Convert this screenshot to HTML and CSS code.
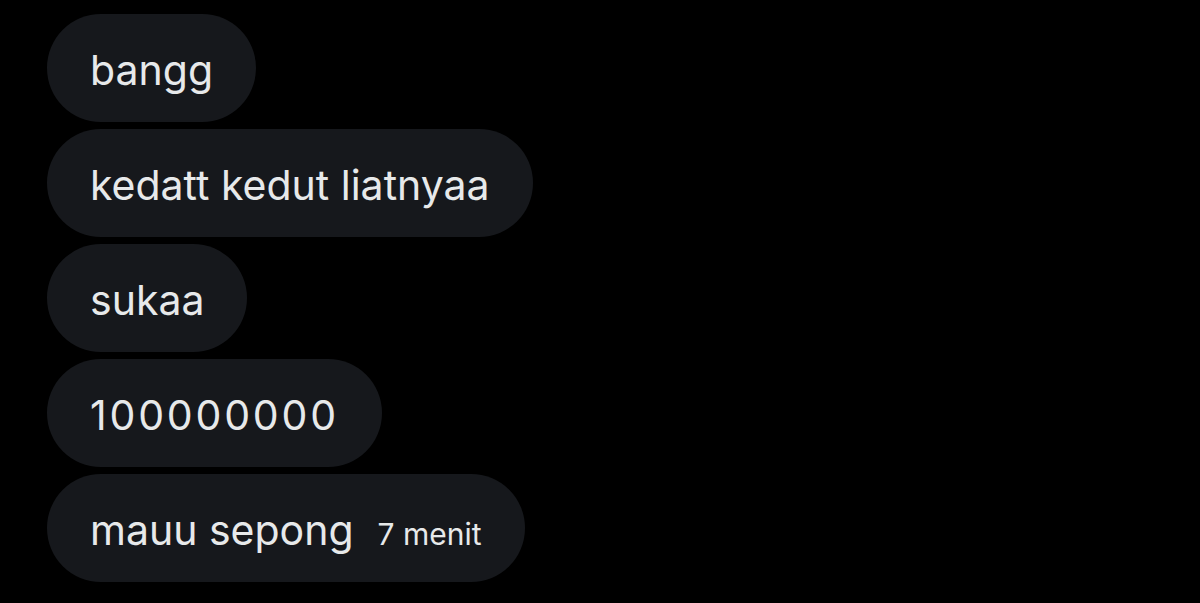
FILE: index.html
```html
<!DOCTYPE html>
<html>
<head>
<meta charset="utf-8">
<link rel="stylesheet" href="styles.css">
</head>
<body>
<div class="thread">
  <div class="bubble"><span class="msg">bangg</span></div>
  <div class="bubble"><span class="msg">kedatt kedut liatnyaa</span></div>
  <div class="bubble"><span class="msg">sukaa</span></div>
  <div class="bubble"><span class="msg num">100000000</span></div>
  <div class="bubble"><span class="msg">mauu sepong</span><span class="time">7 menit</span></div>
</div>
</body>
</html>
```

FILE: styles.css
```css
html, body {
  margin: 0;
  padding: 0;
  background: #000;
  width: 1200px;
  height: 603px;
  overflow: hidden;
}
.thread {
  display: flex;
  flex-direction: column;
  align-items: flex-start;
  gap: 7px;
  padding: 14px 0 0 47px;
}
.bubble {
  display: flex;
  align-items: baseline;
  gap: 24px;
  background: #16181c;
  border-radius: 54px;
  height: 108px;
  box-sizing: border-box;
  padding: 34px 43px 0 43px;
  font-family: Inter, "Noto Sans", sans-serif;
  color: #e7e9ea;
}
.msg {
  font-size: 41px;
  line-height: 44px;
}
.num {
  letter-spacing: 2.8px;
}
.time {
  font-size: 30px;
}
```
